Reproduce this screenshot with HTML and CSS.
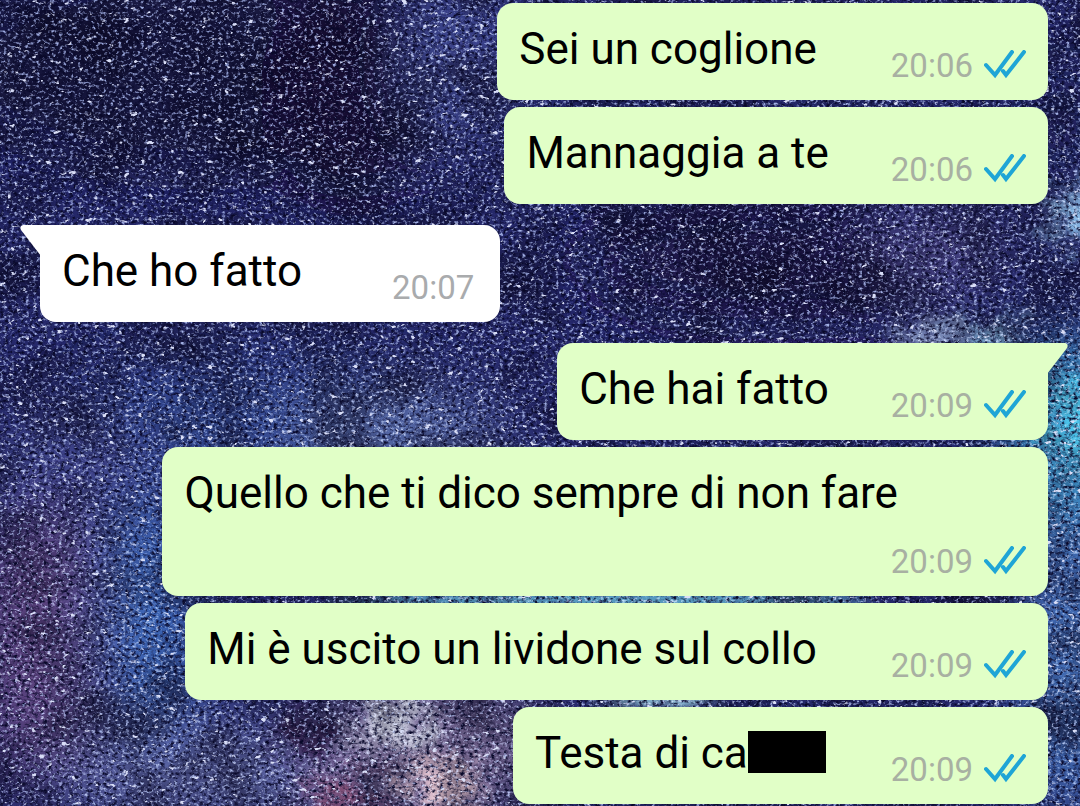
FILE: index.html
```
<!DOCTYPE html>
<html lang="it">

<head>
  <meta charset="UTF-8">
  <meta name="viewport" content="width=device-width, initial-scale=1.0">
  <title>Chat</title>
  <link rel="stylesheet" href="styles.css">
</head>

<body>
  <!-- night sky wallpaper -->
  <svg class="wallpaper" viewBox="0 0 1080 806" preserveAspectRatio="xMidYMid slice" aria-hidden="true">
    <defs>
      <filter id="soft" x="-50%" y="-50%" width="200%" height="200%">
        <feGaussianBlur stdDeviation="30" />
      </filter>
      <!-- blurred patches with ragged edges -->
      <filter id="glow" x="-50%" y="-50%" width="200%" height="200%">
        <feGaussianBlur stdDeviation="11" result="blur" />
        <feTurbulence type="fractalNoise" baseFrequency="0.04" numOctaves="4" seed="5" />
        <feDisplacementMap in="blur" scale="60" xChannelSelector="R" yChannelSelector="G" />
      </filter>
      <filter id="clouds" x="0" y="0" width="100%" height="100%" color-interpolation-filters="sRGB">
        <feTurbulence type="fractalNoise" baseFrequency="0.016" numOctaves="5" seed="8" />
        <feColorMatrix values="0 0 0 0 0.03  0 0 0 0 0.02  0 0 0 0 0.1  2.4 0 0 0 -0.95" />
      </filter>
      <filter id="grain" x="0" y="0" width="100%" height="100%" color-interpolation-filters="sRGB">
        <feTurbulence type="fractalNoise" baseFrequency="0.23 0.29" numOctaves="3" seed="3" />
        <feColorMatrix values="0 0 0 0 0.03  0 0 0 0 0.03  0 0 0 0 0.16  3 0 0 0 -1.35" />
      </filter>
      <filter id="dust" x="0" y="0" width="100%" height="100%" color-interpolation-filters="sRGB">
        <feTurbulence type="fractalNoise" baseFrequency="0.27 0.33" numOctaves="3" seed="21" />
        <feColorMatrix values="0 0 0 0 0.6  0 0 0 0 0.66  0 0 0 0 0.86  0 3.4 0 0 -1.8" />
      </filter>
      <filter id="stars" x="0" y="0" width="100%" height="100%" color-interpolation-filters="sRGB">
        <feTurbulence type="fractalNoise" baseFrequency="0.13 0.17" numOctaves="3" seed="14" />
        <feColorMatrix values="0 0 0 0 0.85  0 0 0 0 0.87  0 0 0 0 0.97  0 0 9 0 -6.2" />
      </filter>
    </defs>
    <rect width="1080" height="806" fill="#25286a" />
    <g filter="url(#soft)">
      <ellipse cx="200" cy="70" rx="240" ry="100" fill="#17163e" />
      <ellipse cx="350" cy="90" rx="90" ry="110" fill="#121032" />
      <ellipse cx="460" cy="60" rx="50" ry="90" fill="#3f4a94" />
      <ellipse cx="780" cy="260" rx="200" ry="60" fill="#1a1846" />
      <ellipse cx="1060" cy="130" rx="50" ry="60" fill="#1e2058" />
      <ellipse cx="940" cy="250" rx="60" ry="40" fill="#504c90" />
      <ellipse cx="260" cy="430" rx="210" ry="70" fill="#304790" />
      <ellipse cx="400" cy="430" rx="110" ry="28" fill="#6074b0" />
      <ellipse cx="70" cy="500" rx="90" ry="90" fill="#3e4288" />
      <ellipse cx="40" cy="650" rx="70" ry="140" fill="#5a437e" />
      <ellipse cx="150" cy="630" rx="50" ry="130" fill="#3a66b8" />
      <ellipse cx="230" cy="775" rx="180" ry="50" fill="#5c64a2" />
      <ellipse cx="430" cy="750" rx="120" ry="70" fill="#8272a0" />
      <ellipse cx="1070" cy="440" rx="60" ry="100" fill="#3f9cd0" />
      <ellipse cx="1070" cy="660" rx="50" ry="160" fill="#4270b8" />
    </g>
    <g filter="url(#glow)">
      <ellipse cx="1075" cy="215" rx="26" ry="28" fill="#8cbeea" />
      <ellipse cx="930" cy="330" rx="30" ry="14" fill="#98acd4" />
      <ellipse cx="990" cy="338" rx="36" ry="14" fill="#86bce0" />
      <ellipse cx="1072" cy="420" rx="22" ry="50" fill="#4cc4ea" />
      <ellipse cx="390" cy="725" rx="38" ry="24" fill="#c8cadc" />
      <ellipse cx="310" cy="735" rx="30" ry="24" fill="#3a2856" />
      <ellipse cx="440" cy="785" rx="38" ry="28" fill="#e4c4d0" />
      <ellipse cx="345" cy="795" rx="44" ry="14" fill="#84486c" />
      <ellipse cx="660" cy="702" rx="60" ry="14" fill="#a0dcec" />
      <ellipse cx="600" cy="600" rx="270" ry="18" fill="#5ca6c8" />
    </g>
    <rect class="clouds" width="1080" height="806" filter="url(#clouds)" />
    <rect width="1080" height="806" filter="url(#grain)" />
    <rect class="dust" width="1080" height="806" filter="url(#dust)" />
    <rect width="1080" height="806" filter="url(#stars)" />
  </svg>

  <!-- shared read receipt icon -->
  <svg class="sprite" aria-hidden="true">
    <symbol id="ticks" viewBox="0 0 42 32">
      <path d="M2 15 L11 25 L28 2 M19 21 L22 25 L40 2" fill="none" stroke="currentColor" stroke-width="4" stroke-linecap="round" stroke-linejoin="miter" />
    </symbol>
  </svg>

  <main class="chat">
    <div class="message out">
      <p class="text spaced">Sei un coglione</p>
      <div class="meta"><time>20:06</time><svg class="ticks"><use href="#ticks" /></svg></div>
    </div>
    <div class="message out">
      <p class="text">Mannaggia a te</p>
      <div class="meta"><time>20:06</time><svg class="ticks"><use href="#ticks" /></svg></div>
    </div>

    <div class="message in first">
      <svg class="tail" viewBox="0 0 21 32" aria-hidden="true"><path d="M21 0 H3 Q-1 1 1 5 L21 31 Z" /></svg>
      <p class="text">Che ho fatto</p>
      <div class="meta"><time>20:07</time></div>
    </div>

    <div class="message out first">
      <svg class="tail" viewBox="0 0 21 32" aria-hidden="true"><path d="M0 0 H18 Q22 1 20 5 L0 31 Z" /></svg>
      <p class="text">Che hai fatto</p>
      <div class="meta"><time>20:09</time><svg class="ticks"><use href="#ticks" /></svg></div>
    </div>
    <div class="message out">
      <p class="text">Quello che ti dico sempre di non fare</p>
      <div class="meta"><time>20:09</time><svg class="ticks"><use href="#ticks" /></svg></div>
    </div>
    <div class="message out">
      <p class="text spaced">Mi è uscito un lividone sul collo</p>
      <div class="meta"><time>20:09</time><svg class="ticks"><use href="#ticks" /></svg></div>
    </div>
    <div class="message out">
      <p class="text">Testa di ca<span class="censored"></span></p>
      <div class="meta"><time>20:09</time><svg class="ticks"><use href="#ticks" /></svg></div>
    </div>
  </main>
</body>

</html>
```
FILE: styles.css
```
* {
  box-sizing: border-box;
}

body {
  margin: 0;
  background: #1b1c50;
  font-family: Roboto, "Liberation Sans", sans-serif;
  color: #000;
}

.wallpaper {
  position: fixed;
  top: 0;
  left: 0;
  width: 100%;
  height: 100%;
  z-index: -1;
}

.clouds {
  opacity: .6;
}

.dust {
  mix-blend-mode: screen;
}

.sprite {
  position: absolute;
  width: 0;
  height: 0;
}

.chat {
  display: flex;
  flex-direction: column;
  gap: 7px;
  padding: 3px 32px 3px 40px;
}

.message {
  position: relative;
  display: flex;
  flex-wrap: wrap;
  row-gap: 24px;
  max-width: 82vw;
  min-height: 97px;
  padding: 21px 22px 14px 22px;
  border-radius: 16px;
}

.out {
  align-self: flex-end;
  background: #e1ffc7;
}

.in {
  align-self: flex-start;
  padding-right: 26px;
  background: #fff;
}

.first {
  margin-top: 14px;
}

.in.first {
  border-top-left-radius: 0;
}

.out.first {
  border-top-right-radius: 0;
}

.text {
  margin: 0 62px 0 0;
  font-size: 44px;
  line-height: 50px;
}

.spaced {
  margin-right: 74px;
}

.in .text {
  margin-right: 90px;
}

.censored {
  display: inline-block;
  width: 78px;
  height: 42px;
  margin-right: 3px;
  vertical-align: -5px;
  background: #000;
}

.meta {
  display: flex;
  align-items: center;
  align-self: flex-end;
  gap: 11px;
  margin-left: auto;
  font-size: 33px;
  line-height: 40px;
  color: #a8b0a2;
}

.in .meta {
  color: #a9abad;
}

.ticks {
  width: 42px;
  height: 32px;
  color: #1fa5d6;
}

.tail {
  position: absolute;
  top: 0;
  width: 21px;
  height: 32px;
}

.in .tail {
  right: calc(100% - 1px);
  fill: #fff;
}

.out .tail {
  left: calc(100% - 1px);
  fill: #e1ffc7;
}
```
